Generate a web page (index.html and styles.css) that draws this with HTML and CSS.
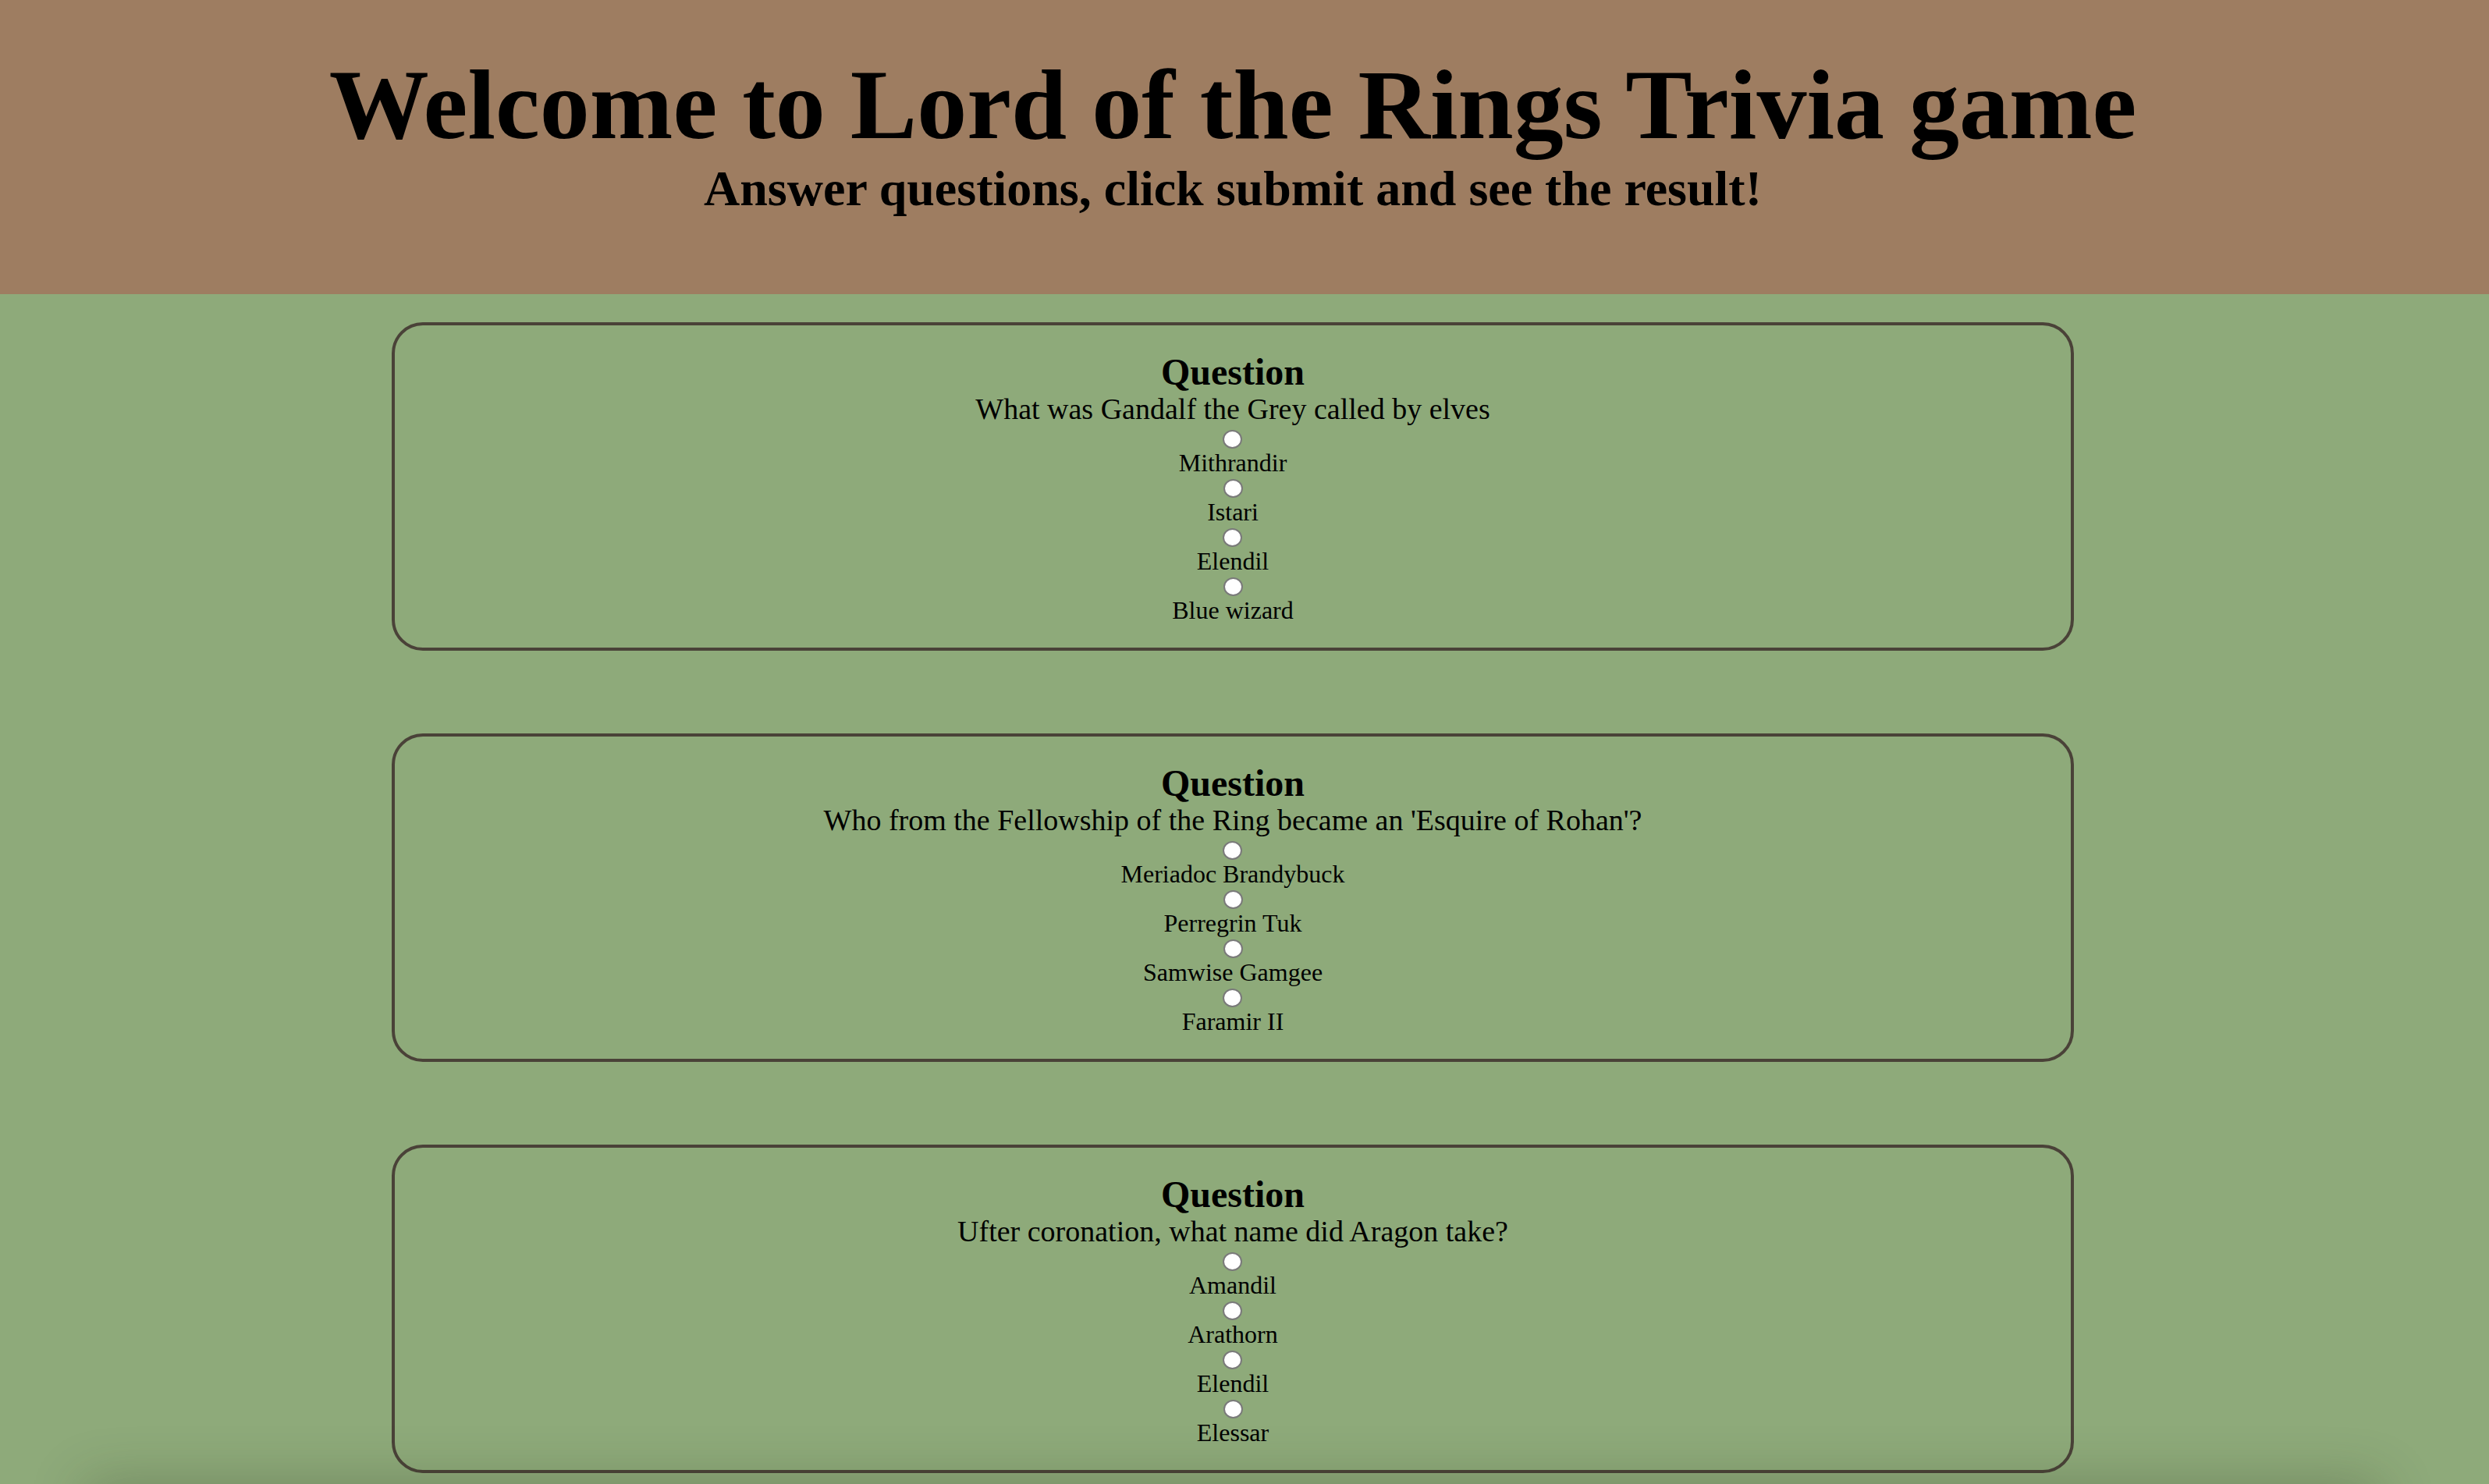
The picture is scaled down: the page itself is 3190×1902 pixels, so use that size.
FILE: index.html
```html
<!DOCTYPE html>
<html lang="en">
<head>
<meta charset="utf-8">
<title>Lord of the Rings Trivia</title>
<link rel="stylesheet" href="styles.css">
</head>
<body>
<header class="banner">
  <h1 class="banner-title">Welcome to Lord of the Rings Trivia game</h1>
  <h2 class="banner-subtitle">Answer questions, click submit and see the result!</h2>
</header>
<main class="quiz">
  <section class="card">
    <h3 class="card-heading">Question</h3>
    <p class="card-text">What was Gandalf the Grey called by elves</p>
    <label class="option"><input class="radio" type="radio" name="q1"><span class="option-label">Mithrandir</span></label>
    <label class="option"><input class="radio" type="radio" name="q1"><span class="option-label">Istari</span></label>
    <label class="option"><input class="radio" type="radio" name="q1"><span class="option-label">Elendil</span></label>
    <label class="option"><input class="radio" type="radio" name="q1"><span class="option-label">Blue wizard</span></label>
  </section>
  <section class="card">
    <h3 class="card-heading">Question</h3>
    <p class="card-text">Who from the Fellowship of the Ring became an 'Esquire of Rohan'?</p>
    <label class="option"><input class="radio" type="radio" name="q2"><span class="option-label">Meriadoc Brandybuck</span></label>
    <label class="option"><input class="radio" type="radio" name="q2"><span class="option-label">Perregrin Tuk</span></label>
    <label class="option"><input class="radio" type="radio" name="q2"><span class="option-label">Samwise Gamgee</span></label>
    <label class="option"><input class="radio" type="radio" name="q2"><span class="option-label">Faramir II</span></label>
  </section>
  <section class="card">
    <h3 class="card-heading">Question</h3>
    <p class="card-text">Ufter coronation, what name did Aragon take?</p>
    <label class="option"><input class="radio" type="radio" name="q3"><span class="option-label">Amandil</span></label>
    <label class="option"><input class="radio" type="radio" name="q3"><span class="option-label">Arathorn</span></label>
    <label class="option"><input class="radio" type="radio" name="q3"><span class="option-label">Elendil</span></label>
    <label class="option"><input class="radio" type="radio" name="q3"><span class="option-label">Elessar</span></label>
  </section>
</main>
</body>
</html>
```
FILE: styles.css
```css
html, body {
  margin: 0;
  padding: 0;
}

body {
  background: #8eaa7a;
  font-family: "Liberation Serif", "Times New Roman", serif;
  color: #000;
  overflow: hidden;
}

body::after {
  content: "";
  position: fixed;
  left: 110px;
  right: 140px;
  bottom: -60px;
  height: 60px;
  box-shadow: 0 0 70px 0 rgba(40, 50, 30, 0.3);
  pointer-events: none;
}

.banner {
  background: #9e7d61;
  height: 377px;
  box-sizing: border-box;
  padding: 62px 30px 0 0;
  text-align: center;
}

.banner-title {
  margin: 0;
  font-size: 128px;
  line-height: 144px;
  font-weight: bold;
}

.banner-subtitle {
  margin: 0;
  font-size: 64px;
  line-height: 72px;
  font-weight: bold;
}

.quiz {
  padding: 36px 30px 0 0;
  display: flex;
  flex-direction: column;
  align-items: center;
  gap: 106px;
}

.card {
  width: 2156px;
  box-sizing: border-box;
  border: 4px solid #4a4238;
  border-radius: 40px;
  padding: 32px 0 30px;
  display: flex;
  flex-direction: column;
  align-items: center;
  text-align: center;
}

.card-heading {
  margin: 0;
  font-size: 48px;
  line-height: 55px;
  font-weight: bold;
}

.card-text {
  margin: 0 0 3px;
  font-size: 38px;
  line-height: 41px;
}

.option {
  display: flex;
  flex-direction: column;
  align-items: center;
}

.radio {
  -webkit-appearance: none;
  appearance: none;
  width: 25px;
  height: 24px;
  margin: 3px 0 0;
  box-sizing: border-box;
  border: 2px solid #7a7a7a;
  border-radius: 50%;
  background: #fff;
}

.option-label {
  font-size: 32px;
  line-height: 36px;
}
```
